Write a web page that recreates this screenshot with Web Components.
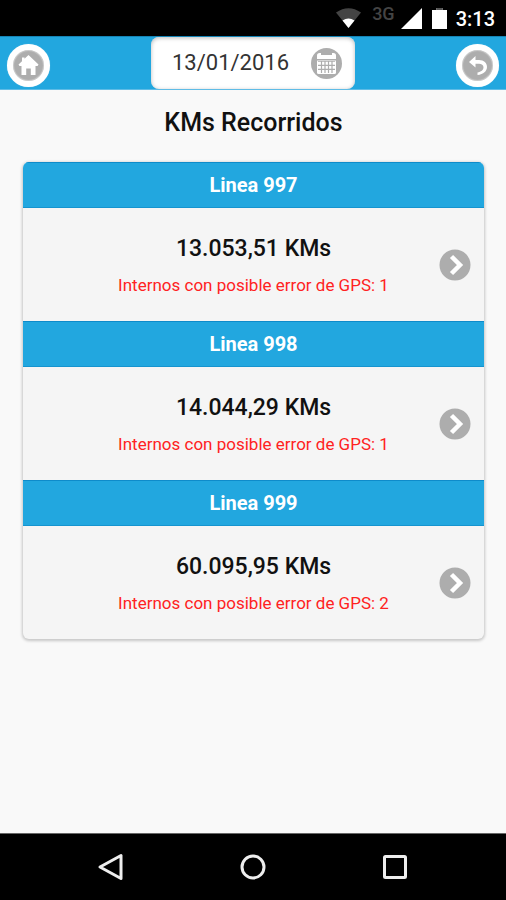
<!DOCTYPE html>
<html lang="es">
<head>
<meta charset="utf-8">
<meta name="viewport" content="width=device-width, initial-scale=1">
<title>KMs Recorridos</title>
<style>
html, body { margin: 0; height: 100%; }
body { font-family: Roboto, "Noto Sans", sans-serif; background: #f9f9f9; color: #111; }
</style>
</head>
<body>
<km-app></km-app>

<template id="t-app">
<style>
:host { display: flex; flex-direction: column; min-height: 100vh; }
main { flex: 1; padding: 0 22px 24px 23px; }
h1 { margin: 0; padding: 17px 0 23px; font-size: 25px; line-height: 32px; font-weight: 500; text-align: center; }
</style>
<status-bar></status-bar>
<app-header date="13/01/2016"></app-header>
<main>
  <h1>KMs Recorridos</h1>
  <line-list>
    <line-item errors="1"><span slot="name">Linea 997</span><span slot="kms">13.053,51 KMs</span></line-item>
    <line-item errors="1"><span slot="name">Linea 998</span><span slot="kms">14.044,29 KMs</span></line-item>
    <line-item errors="2"><span slot="name">Linea 999</span><span slot="kms">60.095,95 KMs</span></line-item>
  </line-list>
</main>
<nav-bar></nav-bar>
</template>

<template id="t-status">
<style>
:host { display: flex; justify-content: flex-end; align-items: center; height: 36px; padding-right: 11px; background: #000; color: #fff; }
.net { font-size: 18px; line-height: 20px; font-weight: 500; color: #444; margin: 0 6px 8px 11px; }
.time { font-size: 20px; line-height: 24px; font-weight: 500; margin: 2px 0 0 9px; }
svg { display: block; }
.battery { margin-left: 10px; }
</style>
<svg width="25" height="20" viewBox="0 0 25 20" aria-hidden="true"><path d="M0 4.500Q12.500-4 25 4.500L12.500 20Z" fill="#444"/><path d="M6.500 12.500Q12.500 8.500 18.500 12.500L12.500 20Z" fill="#fff"/></svg>
<span class="net">3G</span>
<svg width="21" height="21" viewBox="0 0 21 21" aria-hidden="true"><path d="M21 0V21H0Z" fill="#fff"/></svg>
<svg class="battery" width="15" height="21" viewBox="0 0 15 21" aria-hidden="true"><path d="M4.500 0h6v2H15v19H0V2h4.500Z" fill="#fff"/><path d="M4.500 0h6v2h-6Z" fill="#555"/></svg>
<span class="time">3:13</span>
</template>

<template id="t-header">
<style>
:host { display: flex; justify-content: space-between; align-items: center; height: 54px; padding: 0 7px; box-sizing: border-box; background: #22a7df; border-top: 1px solid #1584b5; border-bottom: 1px solid #5fbce6; }
.date { display: flex; align-items: center; box-sizing: border-box; width: 204px; height: 52px; padding: 0 13px 0 21px; border-radius: 8px; background: #fff; box-shadow: inset 0 1px 4px #bbb; }
input { flex: 1; min-width: 0; padding: 0; border: 0; outline: 0; background: none; font: 400 22px/28px Roboto, sans-serif; color: #333; }
.date button { display: block; padding: 0; border: 0; background: none; cursor: pointer; }
svg { display: block; }
round-button { margin-top: 4px; }
</style>
<round-button label="Inicio"><svg width="31" height="31" viewBox="0 0 31 31" aria-hidden="true"><path fill="#fff" d="M15.500 5 25.500 14.500 24.500 16H22.500V25H17.800V18.500H13.200V25H8.500V16H6.500L5.500 14.500 9 11.200V7.500H11.500V8.800Z"/></svg></round-button>
<div class="date">
  <input type="text" aria-label="Fecha" readonly>
  <button type="button" aria-label="Elegir fecha"><svg width="31" height="31" viewBox="0 0 31 31" aria-hidden="true"><circle cx="15.500" cy="15.500" r="15.500" fill="#adadad"/><path fill="#fff" d="M6 7.500Q6 5 8.500 5H10V7H21V5H22.500Q25 5 25 7.500V11H6Z"/><rect x="6" y="12" width="19" height="14" rx="1.500" fill="#fff"/><path stroke="#adadad" stroke-width="1.200" fill="none" d="M7 13.200H24M7 17.300H24M7 21.300H24M10.500 13V25M14 13V25M17.500 13V25M21 13V25"/></svg></button>
</div>
<round-button label="Volver"><svg width="31" height="31" viewBox="0 0 31 31" aria-hidden="true"><path fill="#fff" d="M7 12 13.500 6V10H17C22 10 25 13 25 17C25 21 21.500 24.500 15.500 25V22.500C19 22 21.500 20 21.500 17.300C21.500 15 19.500 13.800 17 13.800H13.500V17.500Z"/></svg></round-button>
</template>

<template id="t-round">
<style>
:host { display: block; }
button { display: flex; align-items: center; justify-content: center; width: 43px; height: 43px; padding: 0; border: 6px solid #fff; border-radius: 50%; background: #adadad; box-shadow: 0 0 1px #8fcdea, inset 0 0 1px 1px #ccc; cursor: pointer; }
</style>
<button type="button"><slot></slot></button>
</template>

<template id="t-list">
<style>
:host { display: block; border-radius: 6px; overflow: hidden; background: #f5f5f5; box-shadow: 0 1px 3px 1px rgba(0,0,0,.2); }
</style>
<slot></slot>
</template>

<template id="t-item">
<style>
:host { display: block; }
h2 { margin: 0; box-sizing: border-box; height: 46px; border-top: 1px solid #0e8bca; border-bottom: 1px solid #1594cf; background: #22a7df; color: #fff; font-size: 20px; line-height: 44px; font-weight: 700; text-align: center; }
a { display: grid; grid-template-columns: 32px 1fr 32px; align-items: center; height: 113px; padding: 0 13px; text-decoration: none; color: #111; }
.text { grid-column: 2; padding-top: 2px; text-align: center; }
p { margin: 0; }
.kms { font-size: 23px; line-height: 28px; font-weight: 500; }
.err { margin-top: 10px; font-size: 17px; line-height: 24px; color: #f22; }
svg { display: block; }
</style>
<h2><slot name="name"></slot></h2>
<a href="#">
  <div class="text">
    <p class="kms"><slot name="kms"></slot></p>
    <p class="err"></p>
  </div>
  <svg width="32" height="32" viewBox="0 0 32 32" aria-hidden="true"><circle cx="16" cy="16" r="15.500" fill="#adadad"/><path d="M12.500 7.500 21 16 12.500 24.500" fill="none" stroke="#fff" stroke-width="4.500"/></svg>
</a>
</template>

<template id="t-nav">
<style>
:host { display: grid; grid-template-columns: repeat(3, 28%); justify-content: center; justify-items: center; align-items: center; height: 67px; box-sizing: border-box; border-top: 1px solid #666; background: #000; }
button { display: block; padding: 0; border: 0; background: none; cursor: pointer; }
svg { display: block; fill: none; stroke: #eee; stroke-width: 3; stroke-linejoin: round; }
</style>
<button type="button" aria-label="Atrás"><svg width="28" height="28" viewBox="0 0 28 28"><path d="M24 2.500V25.500L3 14Z"/></svg></button>
<button type="button" aria-label="Inicio"><svg width="28" height="28" viewBox="0 0 28 28"><circle cx="14" cy="14" r="11"/></svg></button>
<button type="button" aria-label="Recientes"><svg width="28" height="28" viewBox="0 0 28 28"><rect x="3.500" y="3.500" width="21" height="21" rx="1"/></svg></button>
</template>

<script>
class Base extends HTMLElement {
  constructor() {
    super();
    this.attachShadow({ mode: "open" }).append(
      document.getElementById(this.constructor.template).content.cloneNode(true));
  }
}
customElements.define("status-bar", class extends Base { static template = "t-status"; });
customElements.define("nav-bar", class extends Base { static template = "t-nav"; });
customElements.define("line-list", class extends Base { static template = "t-list"; });
customElements.define("round-button", class extends Base {
  static template = "t-round";
  connectedCallback() {
    this.shadowRoot.querySelector("button").setAttribute("aria-label", this.getAttribute("label"));
  }
});
customElements.define("app-header", class extends Base {
  static template = "t-header";
  connectedCallback() { this.shadowRoot.querySelector("input").value = this.getAttribute("date"); }
});
customElements.define("line-item", class extends Base {
  static template = "t-item";
  connectedCallback() {
    this.shadowRoot.querySelector(".err").textContent =
      "Internos con posible error de GPS: " + this.getAttribute("errors");
  }
});
customElements.define("km-app", class extends Base { static template = "t-app"; });
</script>
</body>
</html>
